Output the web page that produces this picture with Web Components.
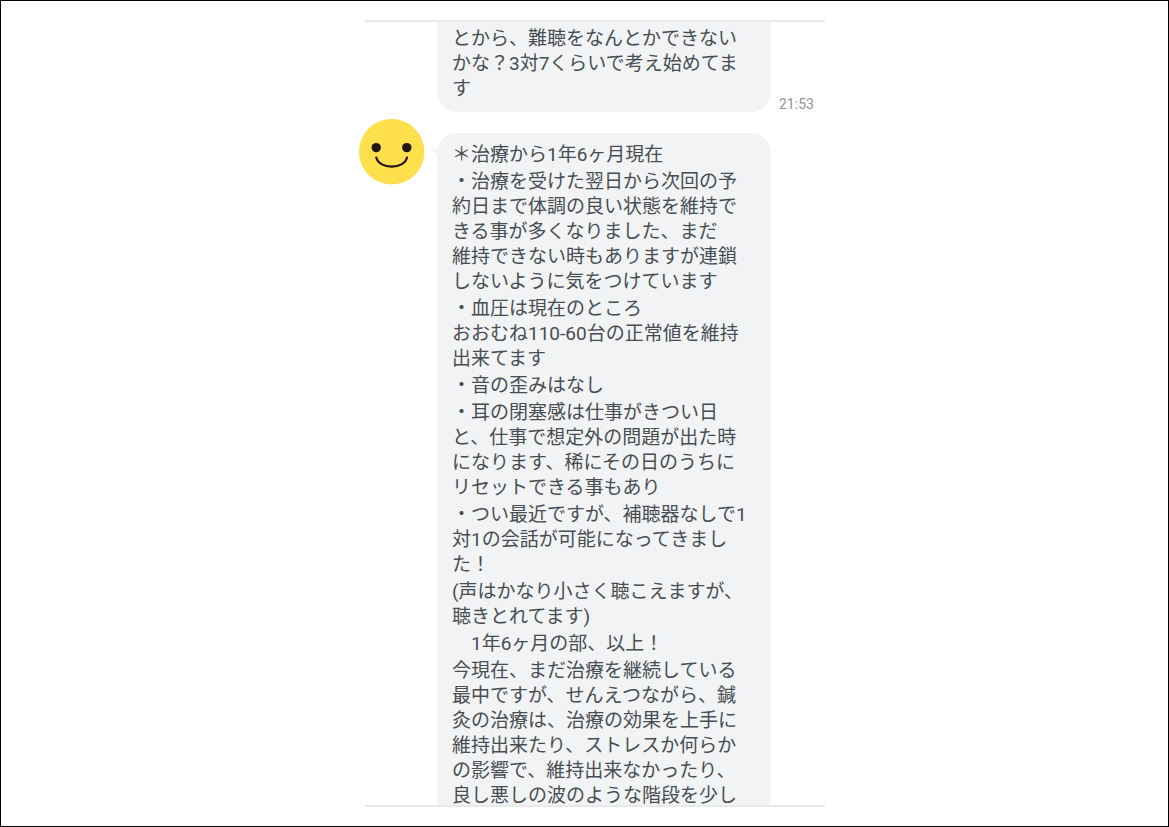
<!DOCTYPE html>
<html lang="ja">
<head>
<meta charset="utf-8">
<meta name="viewport" content="width=device-width, initial-scale=1">
<title>トーク</title>
<style>
  body { margin: 0; background: #fff; }
</style>
</head>
<body>
<chat-frame>
  <chat-message time="21:53" continued>
    <p>とから、難聴をなんとかできない<br>かな？3対7くらいで考え始めてま<br>す</p>
  </chat-message>
  <chat-message>
    <smile-avatar slot="avatar"></smile-avatar>
    <p>＊治療から1年6ヶ月現在</p>
    <p>・治療を受けた翌日から次回の予<br>約日まで体調の良い状態を維持で<br>きる事が多くなりました、まだ<br>維持できない時もありますが連鎖<br>しないように気をつけています</p>
    <p>・血圧は現在のところ<br>おおむね110-60台の正常値を維持<br>出来てます</p>
    <p>・音の歪みはなし</p>
    <p>・耳の閉塞感は仕事がきつい日<br>と、仕事で想定外の問題が出た時<br>になります、稀にその日のうちに<br>リセットできる事もあり</p>
    <p>・つい最近ですが、補聴器なしで1<br>対1の会話が可能になってきまし<br>た！</p>
    <p>(声はかなり小さく聴こえますが、<br>聴きとれてます)</p>
    <p>　1年6ヶ月の部、以上！</p>
    <p>今現在、まだ治療を継続している<br>最中ですが、せんえつながら、鍼<br>灸の治療は、治療の効果を上手に<br>維持出来たり、ストレスか何らか<br>の影響で、維持出来なかったり、<br>良し悪しの波のような階段を少し</p>
  </chat-message>
</chat-frame>

<template id="frame-template">
  <style>
    :host {
      display: flex;
      flex-direction: column;
      align-items: center;
      box-sizing: border-box;
      height: 100vh;
      padding: 19px 0 19px 15px;
      border: 1px solid #000;
      background: #fff;
    }
    main {
      display: flex;
      flex-direction: column;
      flex: 1;
      min-height: 0;
      width: 100%;
      max-width: 466px;
    }
    .log {
      display: flex;
      flex-direction: column;
      gap: 7px;
      flex: 1;
      min-height: 0;
      overflow: hidden;
    }
    hr {
      flex: none;
      height: 2px;
      margin: 0 0 0 6px;
      border: 0;
      background: #e8e9eb;
    }
  </style>
  <main>
    <hr>
    <div class="log"><slot></slot></div>
    <hr>
  </main>
</template>

<template id="message-template">
  <style>
    :host {
      display: grid;
      grid-template-columns: 66px minmax(0, 334px) auto;
      column-gap: 12px;
      justify-content: start;
      flex: none;
    }
    .bubble {
      position: relative;
      margin-top: 14px;
      padding: 9px 0 11px 15px;
      border-radius: 20px;
      background: #f1f3f5;
      color: #484d52;
      font: 19px/25px Roboto, "Noto Sans CJK JP", sans-serif;
      white-space: nowrap;
    }
    .text { display: flex; flex-direction: column; gap: 2px; }
    ::slotted(p) { margin: 0; }
    .tail { position: absolute; left: -8px; top: 14px; fill: #f1f3f5; }
    time {
      align-self: end;
      margin-left: -4px;
      color: #929496;
      font: 14px/16px Roboto, sans-serif;
    }
    :host([continued]) .bubble {
      margin-top: 0;
      padding-top: 4px;
      border-radius: 0 0 20px 20px;
    }
    :host([continued]) .tail { display: none; }
  </style>
  <div><slot name="avatar"></slot></div>
  <div class="bubble">
    <svg class="tail" width="14" height="16" viewBox="0 0 14 16" aria-hidden="true"><path d="M1 1Q7 3 14 0V16Q7 6 1 1Z"/></svg>
    <div class="text"><slot></slot></div>
  </div>
  <time></time>
</template>

<template id="avatar-template">
  <style>
    :host { display: block; }
    svg { display: block; }
  </style>
  <svg width="66" height="66" viewBox="0 0 66 66" role="img" aria-label="笑顔">
    <circle cx="32.7" cy="32.8" r="32.7" fill="#ffdf4b"/>
    <circle cx="17.2" cy="28.6" r="4.7" fill="#231815"/>
    <circle cx="47.8" cy="28.6" r="4.7" fill="#231815"/>
    <path d="M17.3 38.6C20 50.6 45.4 50.6 48 38.6" fill="none" stroke="#231815" stroke-width="2.2" stroke-linecap="round"/>
  </svg>
</template>

<script>
  class TemplateElement extends HTMLElement {
    constructor() {
      super();
      const template = document.getElementById(this.constructor.templateId);
      this.attachShadow({ mode: "open" }).append(template.content.cloneNode(true));
    }
  }

  class ChatFrame extends TemplateElement {
    static templateId = "frame-template";
  }

  class SmileAvatar extends TemplateElement {
    static templateId = "avatar-template";
  }

  class ChatMessage extends TemplateElement {
    static templateId = "message-template";
    connectedCallback() {
      const time = this.shadowRoot.querySelector("time");
      const value = this.getAttribute("time");
      time.hidden = !value;
      time.textContent = value || "";
      time.dateTime = value || "";
    }
  }

  customElements.define("chat-frame", ChatFrame);
  customElements.define("smile-avatar", SmileAvatar);
  customElements.define("chat-message", ChatMessage);
</script>
</body>
</html>
